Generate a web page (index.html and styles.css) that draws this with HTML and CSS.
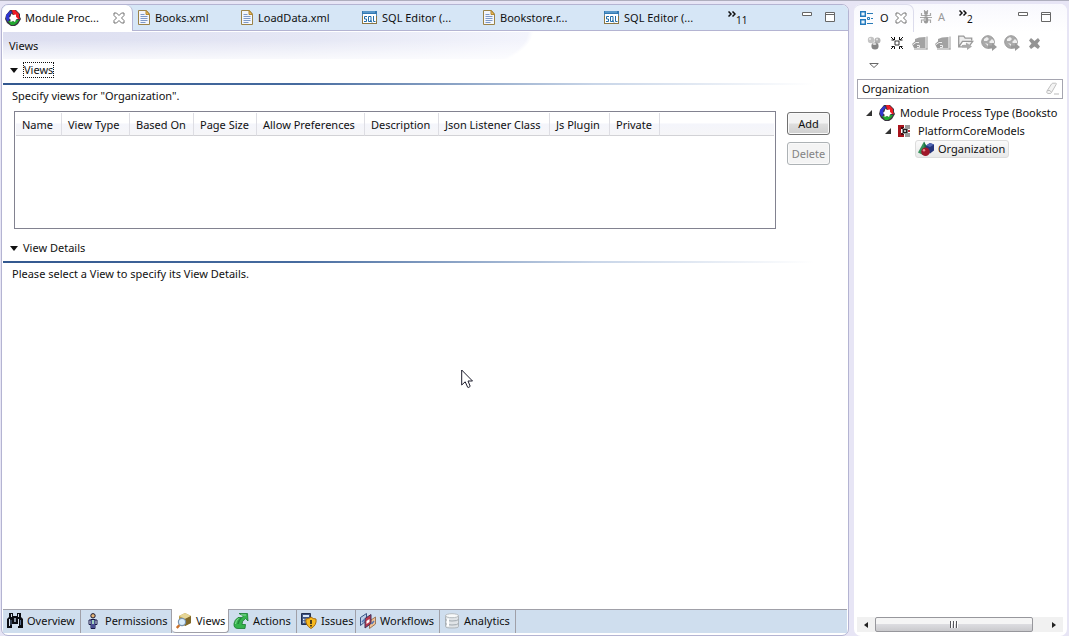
FILE: index.html
```html
<!DOCTYPE html>
<html lang="en">
<head>
<meta charset="utf-8">
<title>Module Process Type - Views</title>
<link rel="stylesheet" href="styles.css">
</head>
<body>
<svg class="symbols" aria-hidden="true">
  <symbol id="i-module" viewBox="0 0 16 16">
    <path d="M5 0h6l4 4v3l1 2-3 5-3 2H6l-4-3-2-4 1-4z" fill="#3a3540"/>
    <path d="M5 1l2 1-3 4 1 2-2 4-2-3V5z" fill="#2f36d0"/>
    <path d="M7 0h3l4 4v3l1 2h-4V7L8 4z" fill="#ee1c25"/>
    <path d="M3 11h4l2 1 2-2h3l-2 3-3 2H6z" fill="#22a830"/>
    <path d="M6.500 3.500L8 5l3-.500V7l2 1.500-2 1L10 12 8 11l-2.500 1V9.500L4 8l1.500-1.500z" fill="#fff"/>
  </symbol>
  <symbol id="i-file" viewBox="0 0 12 15">
    <path d="M.5.500h8l3 3.500v10.500H.5z" fill="#f3f6fd" stroke="#9b8348"/>
    <path d="M8 .500l3.500 4H8z" fill="#f0bb56" stroke="#b18835"/>
    <path d="M2.500 4.500h4M2.500 6.500h7M2.500 8.500h7M2.500 10.500h7M2.500 12.500h5" stroke="#7d99c8"/>
  </symbol>
  <symbol id="i-sql" viewBox="0 0 15 13">
    <path d="M.5.500h14v12H.5z" fill="#fff" stroke="#5b87ad"/>
    <path d="M0 0h15v3H0z" fill="#3379b3"/><path d="M1 1h12" stroke="#7db5df"/>
    <path d="M0 12.500h15M14.500 5v8M.500 5v8" stroke="#8b7542"/>
    <path d="M5 5.500H2.500v2.500H4.500v2.500H2M6.500 5.500h2.500v5H6.500zM8.500 9l1.500 2.500M11.500 5v5.500H13.500" fill="none" stroke="#236da9"/>
  </symbol>
  <symbol id="i-close" viewBox="0 0 12 12">
    <path d="M1 1h2.500L6 3.500 8.500 1H11v2.500L8.500 6 11 8.500V11H8.500L6 8.500 3.500 11H1V8.500L3.500 6 1 3.500z" fill="#fff" stroke="#707070"/>
  </symbol>
  <symbol id="i-min" viewBox="0 0 10 4"><path d="M.5.500h9v3h-9z" fill="#fff" stroke="#666"/></symbol>
  <symbol id="i-max" viewBox="0 0 10 10"><path d="M.5.500h9v9h-9zM0 2.500h10" fill="#fff" stroke="#666"/></symbol>
  <symbol id="i-more" viewBox="0 0 8 6"><path d="M.5.500L3 3 .5 5.500M4.500.500L7 3 4.500 5.500" fill="none" stroke="#111" stroke-width="1.500"/></symbol>
  <symbol id="i-outline" viewBox="0 0 14 14">
    <path d="M.7.700h4.600v4.600H.7zM.7 8.700h4.600v4.600H.7z" fill="#eaf5fd" stroke="#2279bd" stroke-width="1.400"/>
    <path d="M7 2.500h6M7 12.500h6M11 7.500h2" stroke="#287ab7"/>
    <path d="M7.500 6.500h2v2h-2z" fill="#eaf5fd" stroke="#287ab7"/>
  </symbol>
  <symbol id="i-bug" viewBox="0 0 12 14">
    <path d="M1.500 3v2.500H10.500V3M0 7.500h12M1.500 13V10h9v3M4.500 0v2M7.500 0v2" fill="none" stroke="#a8a8a8" stroke-width="1.200"/>
    <circle cx="6" cy="3" r="2" fill="#9b9b9b"/><path d="M4.500 5h3v1.500h-3z" fill="#999"/><ellipse cx="6" cy="10" rx="2.300" ry="3.500" fill="#999"/><path d="M5 8v3" stroke="#ddd"/>
  </symbol>
  <symbol id="i-balls" viewBox="0 0 16 16">
    <circle cx="5" cy="5" r="3.200" fill="#c4c4c4"/><circle cx="11.500" cy="5.500" r="3" fill="#b2b2b2"/><circle cx="9" cy="11" r="3.600" fill="#858585"/><circle cx="4" cy="4" r="1" fill="#eee"/><circle cx="11" cy="4.500" r="1" fill="#e6e6e6"/><ellipse cx="8.500" cy="9" rx="2" ry="1" fill="#ddd"/>
  </symbol>
  <symbol id="i-collapse" viewBox="0 0 14 14">
    <path d="M5 5h4v4H5z" fill="#fff" stroke="#333"/><path d="M1 1l3 3M13 1l-3 3M1 13l3-3M13 13l-3-3M1.500 4h3V1M12.500 4h-3V1M1.500 10.500h3V13M12.500 10.500h-3V13" fill="none" stroke="#111"/>
  </symbol>
  <symbol id="i-import" viewBox="0 0 16 14">
    <path d="M3 3l4-1.500L13.500 1v11H3z" fill="#a3a3a3"/><path d="M15 .500v13M2 13h13.500" stroke="#999"/>
    <path d="M0 8l3.500-3h3v1.500L4 9h3v3H2z" fill="#999"/><path d="M.5 9L4 6.500h3M5 9.500h2.500v2H5" fill="none" stroke="#eee"/>
  </symbol>
  <symbol id="i-folder" viewBox="0 0 16 15">
    <path d="M.7 11V.700h5l1.500 2h6.500V5M.700 11.300h10l4-5.500H4.500z" fill="#eee" stroke="#999" stroke-width="1.300"/><path d="M4 9.500h4V7l6 4-5 3.500v-2.500H4z" fill="#aaa"/>
  </symbol>
  <symbol id="i-globe" viewBox="0 0 16 16">
    <circle cx="7" cy="7" r="6.300" fill="#aaa" stroke="#999"/><path d="M3 4l3-2 2 2-2 2H3zM8 7l3-3 2 2v2H9zM4 8l3 1v2z" fill="#eee"/><path d="M7 10.500h4V8l5 4-5 4v-2.500H7z" fill="#999"/>
  </symbol>
  <symbol id="i-x" viewBox="0 0 11 11">
    <path d="M2 0l3.500 3L9 0l2 2.500-2.500 3 2.500 3L9 11 5.500 8.500 2 11 0 8.500l2.500-3L0 2.500z" fill="#949494"/>
  </symbol>
  <symbol id="i-down" viewBox="0 0 10 5"><path d="M.700.500h8.600L5 4.500z" fill="#fff" stroke="#666"/></symbol>
  <symbol id="i-eraser" viewBox="0 0 14 13"><path d="M1 8.500L5.500 1.500Q6 .700 7 .700h2.500q1.500 0 .5 1.500L5.500 10q-.5 1-1.500 1H2Q0 10.500 1 8.500zM1 8h3l1.500 2" fill="#f3f3f3" stroke="#c0c0c0"/><path d="M8 11.500h5" stroke="#bbb"/></symbol>
  <symbol id="i-package" viewBox="0 0 12 12">
    <path d="M0 0h6v2.500H3V9h3v3H0z" fill="#a8131c"/><path d="M3 2h3v2H3zM3 8h3v2H3z" fill="#4a0c12"/>
    <path d="M7 0h5v4H9.500v4H12v4H7V9H5V3h2z" fill="#9a9a9a"/><path d="M4.500 4h5v4h-5z" fill="#222"/><circle cx="7" cy="6" r="1" fill="#eee"/><path d="M10 5h2v2h-2z" fill="#ba2735"/>
  </symbol>
  <symbol id="i-shapes" viewBox="0 0 16 15">
    <path d="M6 0L0 11l5 2.500L11 10z" fill="#36925b"/><path d="M6 0l1 12 4-2z" fill="#176d42"/>
    <path d="M8 4l4-2.500L16 3v6l-4 3-4-3z" fill="#25347c"/><path d="M8 4l4-2.500L16 3l-4 2.500z" fill="#5369b5"/>
    <circle cx="7.500" cy="10.300" r="4.300" fill="#9f1729"/><circle cx="6" cy="8.800" r="1.200" fill="#e98994"/>
  </symbol>
  <symbol id="i-binoculars" viewBox="0 0 16 16">
    <path d="M2 0h4v3h4V0h4v4l2 2v9h-5v-4H5v4H0V6l2-2z" fill="#0b0d13"/><path d="M2.500 6v7M11.500 6v7M4.500 1v3M11.500 1v3" stroke="#d8e2ef"/><path d="M7 5h2v4H7z" fill="#8d98a8"/><path d="M4 7v5M13.500 7v5" stroke="#59708f"/>
  </symbol>
  <symbol id="i-person" viewBox="0 0 16 16">
    <circle cx="8" cy="2.800" r="2.200" fill="#e9b777" stroke="#171730"/><path d="M4 7h8v4.500H4z" fill="#e8efff" stroke="#171744"/><path d="M6 6.500h4V15.500H6z" fill="#7a83dc" stroke="#171744"/><path d="M8 11v4" stroke="#171744"/><path d="M7 7h2v4H7z" fill="#9fd0c0"/>
  </symbol>
  <symbol id="i-view" viewBox="0 0 16 16">
    <path d="M3 3l6-3 6 3v7l-6 3-6-3z" fill="#b99943"/><path d="M3 3l6-3 6 3-6 3z" fill="#e6d697"/><path d="M9 6l6-3v7l-6 3z" fill="#806829"/>
    <path d="M3.500 12L.8 15" stroke="#ca7029" stroke-width="2.400"/><circle cx="6" cy="9" r="3.600" fill="#d9edfb" stroke="#7893ae" stroke-width="1.200"/>
  </symbol>
  <symbol id="i-action" viewBox="0 0 16 16">
    <path d="M6 .500h8.500L15 8l-2.500-2.500q-4 3-3.500 6h3.500L12 15.500H5Q.5 15.500 1 10.500 1.500 7 5 4.500H8.500Q4.500 8 5 11q1.500-5.500 5.500-8z" fill="#35b34c" stroke="#187b2e" stroke-width=".8"/><path d="M2.500 11q0-3 3-5.500M8 2h5" fill="none" stroke="#8be09b"/>
  </symbol>
  <symbol id="i-issue" viewBox="0 0 16 16">
    <path d="M.5.500h9v11h-9z" fill="#3d5484" stroke="#22304d"/><path d="M2 2h6v2H2z" fill="#d9e8f6"/><path d="M2 6.500h6M2 9h6" stroke="#e4edf7" stroke-width="1.500" stroke-dasharray="1.500 1"/>
    <path d="M5 6q3 0 5-2 2 2 5 2 1 6-5 9.500Q4 12 5 6z" fill="#f7b91e" stroke="#a66b0c"/><path d="M10 7v4M10 12v1.500" stroke="#222" stroke-width="1.600"/>
  </symbol>
  <symbol id="i-flow" viewBox="0 0 16 16">
    <path d="M.500 4.500l6-4v7l-6 5z" fill="#b9cce6" stroke="#3a5484"/><path d="M9.500 8l6-4v7l-6 4.500z" fill="#f3c493" stroke="#9b7659"/><path d="M5 5.500l6-4v9L5 15z" fill="#b9384d" stroke="#41315b"/>
    <path d="M6.500 8l3-2v3l-3 2z" fill="#fff"/><path d="M2 9l3-3M11.500 11l2.500-3" stroke="#5277b5" stroke-width="1.500"/>
  </symbol>
  <symbol id="i-data" viewBox="0 0 16 16">
    <path d="M1.500 2.500v11q0 1.500 6.500 1.500t6.500-1.500v-11z" fill="#e0e4e7" stroke="#aeb5ba"/><ellipse cx="8" cy="2.700" rx="6.500" ry="2" fill="#f8fafa" stroke="#b7bdc1"/><path d="M1.500 6.500Q2.500 8 8 8t6.500-1.500M1.500 10.500Q2.500 12 8 12t6.500-1.500" fill="none" stroke="#a0a8ae"/><path d="M4 5.500v8" stroke="#fff" stroke-width="2"/>
  </symbol>
</svg>

<div class="workbench">
  <main class="editor">
    <nav class="file-tabs" aria-label="Open editors">
      <button class="file-tab tab-active"><svg class="i16"><use href="#i-module"/></svg><span class="grow">Module Proc...</span><svg class="i12"><use href="#i-close"/></svg></button>
      <button class="file-tab tab-short"><svg class="i-doc"><use href="#i-file"/></svg>Books.xml</button>
      <button class="file-tab tab-long"><svg class="i-doc"><use href="#i-file"/></svg>LoadData.xml</button>
      <button class="file-tab tab-long"><svg class="i-sql"><use href="#i-sql"/></svg>SQL Editor (...</button>
      <button class="file-tab tab-long"><svg class="i-doc"><use href="#i-file"/></svg>Bookstore.r...</button>
      <button class="file-tab tab-long"><svg class="i-sql"><use href="#i-sql"/></svg>SQL Editor (...</button>
      <button class="overflow" aria-label="11 more editors"><svg><use href="#i-more"/></svg><span>11</span></button>
      <span class="pane-controls"><button aria-label="Minimize"><svg class="i-min"><use href="#i-min"/></svg></button><button aria-label="Maximize"><svg class="i-max"><use href="#i-max"/></svg></button></span>
    </nav>
    <h1 class="form-title">Views</h1>
    <section class="section">
      <h2 class="section-title"><button><span class="twistie"></span><span class="focused">Views</span></button></h2>
      <p class="section-text">Specify views for "Organization".</p>
      <div class="views-row">
        <div class="table-box">
          <table class="views-table">
            <colgroup><col class="c-name"><col class="c-type"><col class="c-based"><col class="c-page"><col class="c-allow"><col class="c-desc"><col class="c-json"><col class="c-js"><col class="c-private"><col></colgroup>
            <thead><tr><th>Name</th><th>View Type</th><th>Based On</th><th>Page Size</th><th>Allow Preferences</th><th>Description</th><th>Json Listener Class</th><th>Js Plugin</th><th>Private</th><th></th></tr></thead>
          </table>
        </div>
        <div class="table-actions"><button>Add</button><button disabled>Delete</button></div>
      </div>
    </section>
    <section class="section details">
      <h2 class="section-title"><button><span class="twistie"></span><span>View Details</span></button></h2>
      <p class="section-text">Please select a View to specify its View Details.</p>
    </section>
    <nav class="page-tabs" aria-label="Form pages">
      <button class="p-overview"><svg class="i16"><use href="#i-binoculars"/></svg>Overview</button>
      <button class="p-permissions"><svg class="i16"><use href="#i-person"/></svg>Permissions</button>
      <button class="p-views page-active"><svg class="i16"><use href="#i-view"/></svg>Views</button>
      <button class="p-actions"><svg class="i16"><use href="#i-action"/></svg>Actions</button>
      <button class="p-issues"><svg class="i16"><use href="#i-issue"/></svg>Issues</button>
      <button class="p-workflows"><svg class="i16"><use href="#i-flow"/></svg>Workflows</button>
      <button class="p-analytics"><svg class="i16"><use href="#i-data"/></svg>Analytics</button>
    </nav>
  </main>

  <aside class="outline">
    <div class="outline-tabs">
      <button class="outline-tab outline-active"><svg class="i14"><use href="#i-outline"/></svg>O<svg class="i12"><use href="#i-close"/></svg></button>
      <button class="outline-tab outline-idle"><svg class="i-bug"><use href="#i-bug"/></svg>A</button>
      <button class="overflow" aria-label="2 more views"><svg><use href="#i-more"/></svg><span>2</span></button>
      <span class="pane-controls"><button aria-label="Minimize"><svg class="i-min"><use href="#i-min"/></svg></button><button aria-label="Maximize"><svg class="i-max"><use href="#i-max"/></svg></button></span>
    </div>
    <div class="toolbar">
      <button aria-label="Show types"><svg class="i16"><use href="#i-balls"/></svg></button>
      <button aria-label="Collapse all"><svg class="i14"><use href="#i-collapse"/></svg></button>
      <button aria-label="Import"><svg class="i-import"><use href="#i-import"/></svg></button>
      <button aria-label="Export"><svg class="i-import"><use href="#i-import"/></svg></button>
      <button aria-label="Open folder"><svg class="i16"><use href="#i-folder"/></svg></button>
      <button aria-label="Publish"><svg class="i16"><use href="#i-globe"/></svg></button>
      <button aria-label="Deploy"><svg class="i16"><use href="#i-globe"/></svg></button>
      <button aria-label="Remove"><svg class="i11"><use href="#i-x"/></svg></button>
      <button aria-label="View menu"><svg class="i-down"><use href="#i-down"/></svg></button>
    </div>
    <div class="search"><input type="text" value="Organization" aria-label="Filter"><button aria-label="Clear"><svg class="i14"><use href="#i-eraser"/></svg></button></div>
    <ul class="tree">
      <li class="level-1"><svg class="arrow" viewBox="0 0 6 6"><path d="M6 0v6H0z"/></svg><svg class="i16"><use href="#i-module"/></svg><span>Module Process Type (Booksto</span></li>
      <li class="level-2"><svg class="arrow" viewBox="0 0 6 6"><path d="M6 0v6H0z"/></svg><svg class="i12"><use href="#i-package"/></svg><span>PlatformCoreModels</span></li>
      <li class="level-3"><span class="selected"><svg class="i16"><use href="#i-shapes"/></svg>Organization</span></li>
    </ul>
    <div class="scrollbar"><button aria-label="Scroll left"><svg viewBox="0 0 4 6"><path d="M4 0v6L0 3z"/></svg></button><span class="thumb"><i></i><i></i><i></i></span><button aria-label="Scroll right"><svg viewBox="0 0 4 6"><path d="M0 0v6l4-3z"/></svg></button></div>
  </aside>
</div>
<svg class="cursor" viewBox="0 0 12 20" aria-hidden="true"><path d="M.700 1v15l3.500-3.200 2.500 5.500q1 .700 2.500-1L7 12h4.500z" fill="#fff" stroke="#1c1c2c"/></svg>
</body>
</html>
```

FILE: styles.css
```css
* { box-sizing: border-box; }

body {
  margin: 0;
  background: #e7e5f5;
  border-top: 1px solid #aeaebd;
  color: #111;
  font: 11px/16px "Noto Sans", "Open Sans", sans-serif;
  overflow: hidden;
}

.symbols { display: none; }
svg { display: block; flex: none; overflow: visible; }
button {
  border: 0;
  background: none;
  padding: 0;
  margin: 0;
  font: inherit;
  color: inherit;
  white-space: nowrap;
}
h1, h2, p, ul { margin: 0; padding: 0; font: inherit; }

.i16 { width: 16px; height: 16px; }
.i14 { width: 14px; height: 14px; }
.i12 { width: 12px; height: 12px; }
.i11 { width: 11px; height: 11px; }
.i-doc { width: 12px; height: 15px; }
.i-bug { width: 12px; height: 14px; }
.i-import { width: 16px; height: 14px; }
.i-sql { width: 15px; height: 13px; }
.i-min { width: 10px; height: 4px; }
.i-max { width: 10px; height: 10px; }
.i-down { width: 10px; height: 5px; }

.workbench {
  display: grid;
  grid-template-columns: minmax(0, 1fr) 213px;
  gap: 5px;
  height: calc(100vh - 1px);
  padding: 3px 2px 0 1px;
}

.editor {
  display: flex;
  flex-direction: column;
  min-width: 0;
  background: #fff;
  border: 1px solid #b4b4d2;
  border-radius: 7px;
  padding: 0 1px 2px;
}

/* editor tabs */
.file-tabs {
  display: flex;
  height: 26px;
  margin: 0 -1px 1px;
  background: #d6e6f6;
  border-bottom: 1px solid #b4b4d2;
  border-radius: 6px 6px 0 0;
}
.file-tab {
  display: flex;
  align-items: center;
  gap: 5px;
  padding-left: 5px;
  flex: none;
}
.tab-active {
  width: 131px;
  height: 26px;
  gap: 4px;
  padding: 0 7px 0 3px;
  background: #fff;
  border-right: 1px solid #b4b4d2;
  border-radius: 7px 7px 0 0;
}
.grow { flex: 1; text-align: left; }
.tab-short { width: 103px; }
.tab-long { width: 121px; }
.overflow {
  display: flex;
  align-items: flex-start;
  padding-top: 6px;
}
.overflow svg { width: 8px; height: 6px; }
.overflow span { font-size: 10px; padding-top: 1px; }
.file-tabs .overflow { margin-left: 8px; }
.pane-controls {
  display: flex;
  align-items: flex-start;
  gap: 13px;
  margin-left: auto;
  padding: 7px 13px 0 0;
}

/* form */
.form-title {
  height: 27px;
  padding: 6px 6px 0;
  background:
    linear-gradient(to bottom, transparent 30%, rgba(255, 255, 255, .75)),
    radial-gradient(ellipse 530px 90px at 0 0, #dcdef0 0, #e6e8f5 60%, #f3f4fc 99%, transparent 100%);
}
.section-title {
  height: 26px;
  padding: 3px 7px 0;
  border-bottom: 2px solid;
  border-image: linear-gradient(to right, #33588f, #466b9f 35%, #c8d5e8 70%, #fff 96%) 1;
}
.section-title button { display: flex; align-items: center; gap: 5px; }
.twistie {
  border: 4px solid transparent;
  border-top: 5px solid #111;
  border-bottom: 0;
}
.focused { outline: 1px dotted #111; outline-offset: -1px; padding: 0 1px; }
.section-title span:last-child { min-width: 31px; text-align: left; }
.section-text { padding: 3px 9px; height: 26px; }
.views-row {
  display: flex;
  gap: 11px;
  padding: 0 17px 0 11px;
}
.table-box {
  flex: 1;
  height: 118px;
  min-width: 0;
  border: 1px solid #828290;
  padding: 1px;
}
.views-table { width: 100%; table-layout: fixed; border-collapse: separate; border-spacing: 0; }
.views-table th {
  height: 23px;
  padding: 2px 0 0 6px;
  border-right: 1px solid #dedee4;
  border-bottom: 1px solid #d2d2d6;
  background: linear-gradient(#fff 45%, #f4f5fb 50%, #f6f6f8);
  font-weight: 400;
  text-align: left;
  white-space: nowrap;
}
.views-table th:last-child { border-right: 0; }
.c-name { width: 46px; }
.c-type { width: 68px; }
.c-based { width: 64px; }
.c-page { width: 63px; }
.c-allow { width: 108px; }
.c-desc { width: 74px; }
.c-json { width: 111px; }
.c-js { width: 60px; }
.c-private { width: 50px; }

.table-actions { display: flex; flex-direction: column; gap: 7px; padding-top: 1px; width: 43px; }
.table-actions button {
  height: 23px;
  border: 1px solid #707070;
  border-radius: 3px;
  background: linear-gradient(#f3f3f3 48%, #dedede 52%, #cfcfcf);
  box-shadow: inset 0 0 0 1px #fafafa;
}
.table-actions button:disabled { border-color: #adb2b5; background: #f4f4f4; color: #838383; }
.details { margin-top: 8px; }

/* form page tabs */
.page-tabs {
  display: flex;
  height: 24px;
  margin-top: auto;
  background: #cfdeee;
  border-top: 1px solid #a0a0a8;
}
.page-tabs button {
  display: flex;
  align-items: center;
  gap: 4px;
  padding: 0 0 2px 4px;
  border-right: 1px solid #a0a0a8;
}
.page-tabs .page-active {
  margin-top: -1px;
  padding-bottom: 0;
  background: #fff;
  border-bottom: 1px solid #a0a0a8;
  border-radius: 0 0 4px 4px;
}
.p-overview { width: 78px; }
.p-permissions { width: 91px; }
.p-views { width: 57px; }
.p-actions { width: 68px; }
.p-issues { width: 59px; }
.p-workflows { width: 84px; }
.p-analytics { width: 76px; }

/* outline pane */
.outline {
  display: flex;
  flex-direction: column;
  min-width: 0;
  background: #fff;
  border-radius: 7px;
  padding: 0 4px 4px 3px;
}
.outline-tabs {
  display: flex;
  height: 28px;
  margin: 0 -4px 0 -3px;
  background: linear-gradient(#f8f8fd, #fff);
  border-radius: 7px 7px 0 0;
}
.outline-tab { display: flex; align-items: center; gap: 6px; padding: 0 0 2px 6px; }
.outline-active {
  width: 60px;
  border-right: 1px solid #dcdcec;
  border-top: 1px solid #dcdcec;
  border-radius: 7px 7px 0 0;
}
.outline-idle { width: 45px; color: #999; }
.outline-tabs .pane-controls { padding-right: 16px; padding-top: 8px; }
.toolbar {
  display: grid;
  grid-template-columns: repeat(8, 23px);
  grid-auto-rows: 22px;
  padding-left: 5px;
  height: 47px;
}
.toolbar button { display: grid; place-items: center; }
.search {
  display: flex;
  align-items: center;
  height: 20px;
  border: 1px solid #a5a5b0;
  padding: 0 2px 0 4px;
}
.search input {
  flex: 1;
  min-width: 0;
  border: 0;
  padding: 0;
  outline: 0;
  font: inherit;
  color: inherit;
}
.tree { list-style: none; padding-top: 5px; }
.tree li { display: flex; align-items: center; height: 18px; white-space: nowrap; }
.arrow { width: 6px; height: 6px; fill: #333; }
.level-1 { padding-left: 9px; gap: 5px; }
.level-1 .arrow { margin-right: 2px; }
.level-2 { padding-left: 28px; gap: 8px; }
.level-2 .arrow { margin-right: -1px; }
.level-3 { padding-left: 58px; }
.selected {
  display: flex;
  align-items: center;
  gap: 4px;
  height: 18px;
  padding: 0 3px 0 2px;
  border: 1px solid #dcdcdc;
  border-radius: 3px;
  background: linear-gradient(#fafafa, #e9e9e9);
}
.scrollbar { display: flex; height: 15px; margin-top: auto; background: #f1f1f1; }
.scrollbar button { width: 18px; display: grid; place-items: center; }
.scrollbar svg { width: 4px; height: 6px; fill: #222; }
.thumb {
  flex: 1;
  display: flex;
  justify-content: center;
  align-items: center;
  gap: 1px;
  margin-right: 12px;
  border: 1px solid #97979c;
  border-radius: 2px;
  background: linear-gradient(#f5f5f5 45%, #dcdce0 50%, #cacacd);
}
.thumb i { width: 2px; height: 7px; background: #55555a; border-right: 1px solid #fff; }

.cursor { position: absolute; left: 461px; top: 369px; width: 12px; height: 20px; }
```
